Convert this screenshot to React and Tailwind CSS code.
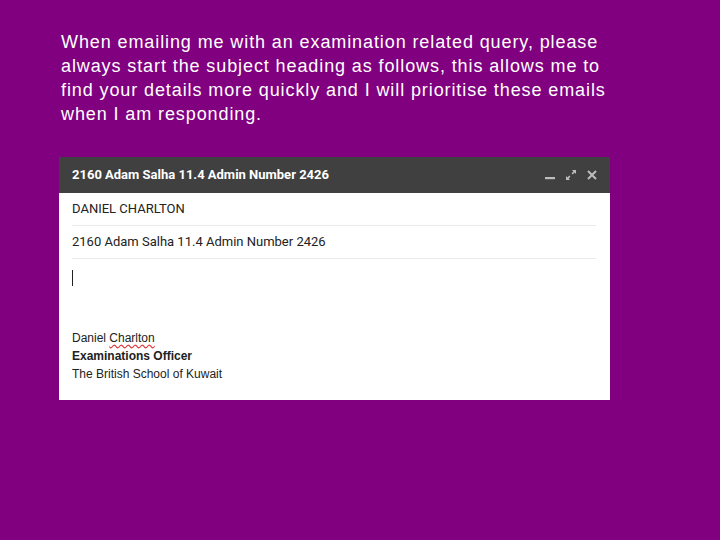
import React from "react";

const Header = () => (
  <div className="flex h-[36px] items-center bg-[#404040] pl-[13px] pr-[12px]">
    <div className="w-[261px] overflow-hidden whitespace-nowrap text-[13px] font-bold text-white [font-family:Roboto,sans-serif]">
      2160 Adam Salha 11.4 Admin Number 2426
    </div>
    <div className="ml-auto flex items-center gap-[9px] text-[#bdbdbd]">
      <svg width="12" height="12" viewBox="0 0 12 12">
        <rect x="1" y="8" width="10" height="2.2" fill="currentColor" />
      </svg>
      <svg width="12" height="12" viewBox="0 0 12 12" fill="currentColor">
        <path d="M7 1h4v4L9.6 3.6 7.8 5.4 6.6 4.2 8.4 2.4z" />
        <path d="M5 11H1V7l1.4 1.4 1.8-1.8 1.2 1.2-1.8 1.8z" />
      </svg>
      <svg width="12" height="12" viewBox="0 0 12 12">
        <path d="M2 2l8 8M10 2l-8 8" stroke="currentColor" strokeWidth="2" />
      </svg>
    </div>
  </div>
);

export default function App() {
  return (
    <div className="h-[540px] w-[720px] bg-[#800080] pt-[30px]">
      <p className="ml-[61px] w-[620px] whitespace-nowrap text-[18px] leading-[24px] tracking-[0.9px] text-white [font-family:Arial,'Liberation_Sans',sans-serif]">
        When emailing me with an examination related query, please
        <br />
        always start the subject heading as follows, this allows me to
        <br />
        find your details more quickly and I will prioritise these emails
        <br />
        when I am responding.
      </p>
      <div className="ml-[59px] mt-[31px] h-[243px] w-[551px] bg-white">
        <Header />
        <div className="pl-[13px] pr-[14px] text-[13px] text-[#222] [font-family:Roboto,sans-serif]">
          <div className="flex h-[33px] items-center border-b border-[#ebebeb]">DANIEL CHARLTON</div>
          <div className="flex h-[33px] items-center border-b border-[#ebebeb]">2160 Adam Salha 11.4 Admin Number 2426</div>
          <div className="mt-[11px] h-[16px] w-px bg-[#222]" />
          <div className="mt-[43px] text-[12px] leading-[18px] text-[#222] [font-family:Arial,'Liberation_Sans',sans-serif]">
            <div>
              Daniel <span className="underline decoration-wavy decoration-[#d33] underline-offset-2">Charlton</span>
            </div>
            <div className="font-bold">Examinations Officer</div>
            <div>The British School of Kuwait</div>
          </div>
        </div>
      </div>
    </div>
  );
}
